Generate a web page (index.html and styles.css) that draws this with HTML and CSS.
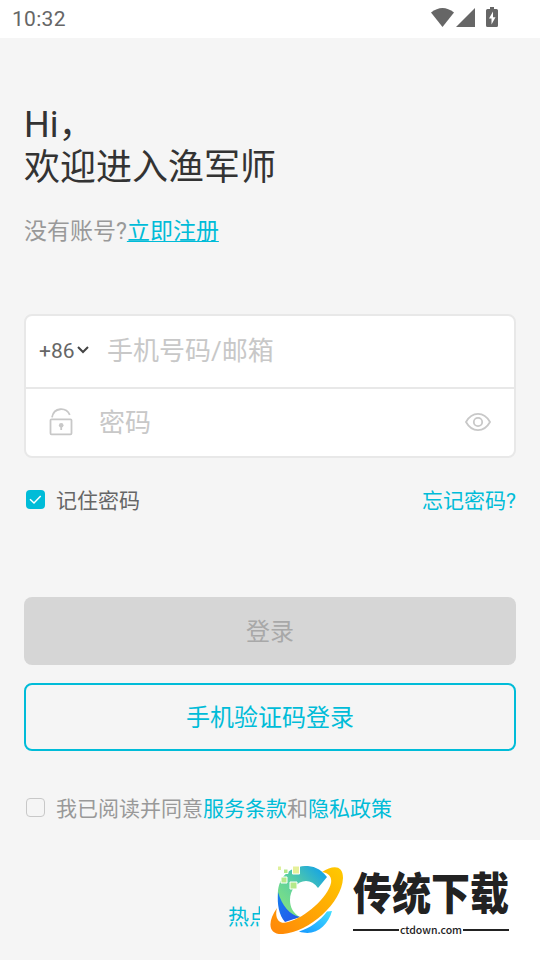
FILE: index.html
```html
<!DOCTYPE html>
<html lang="zh-CN">
<head>
<meta charset="utf-8">
<title>登录</title>
<link rel="stylesheet" href="styles.css">
</head>
<body>
<header class="status">
  <span class="clock">10:32</span>
  <svg class="status-icons" width="70" height="24" viewBox="0 0 70 24">
    <path d="M1 10.500Q12.500 1.500 24 10.500L12.500 25z"/>
    <path d="M26 25L45 6V25z"/>
    <path fill-rule="evenodd" d="M57.500 7H60V5h4v2h2.500q1.500 0 1.500 1.500v15q0 1.500-1.500 1.500h-9q-1.500 0-1.500-1.500v-15Q56 7 57.500 7zM63 9.500L59 16.500h2.500V22.500L65.500 15.300H63z"/>
  </svg>
</header>
<main class="page">
  <h1 class="title">Hi，<br>欢迎进入渔军师</h1>
  <p class="signup">没有账号?<a class="signup-link">立即注册</a></p>
  <section class="fields">
    <div class="field phone">
      <span class="code">+86</span>
      <svg class="chevron" width="14" height="10" viewBox="0 0 14 10"><path d="M2 2L7 7L12 2"/></svg>
      <span class="placeholder">手机号码/邮箱</span>
    </div>
    <div class="field password">
      <svg class="lock" width="26" height="30" viewBox="0 0 26 30">
        <rect x="2.500" y="12.300" width="21" height="15" rx="1"/>
        <path d="M4 10.300C6 0 18 0 21.800 7.800"/>
        <circle class="solid" cx="13.200" cy="18.300" r="2.300"/><path d="M13.200 18.500V23"/>
      </svg>
      <span class="placeholder">密码</span>
      <svg class="eye" width="28" height="22" viewBox="0 0 28 22"><path d="M2 11C8 .2 20 .2 26 11C20 21.800 8 21.800 2 11z"/><circle cx="14" cy="11" r="4.200"/></svg>
    </div>
  </section>
  <div class="options">
    <svg class="check" width="19" height="19" viewBox="0 0 19 19"><rect width="19" height="19" rx="4"/><path d="M4 9.300L8 13L14.700 6"/></svg>
    <span class="remember">记住密码</span>
    <a class="link forgot">忘记密码?</a>
  </div>
  <div class="button disabled">登录</div>
  <div class="button outline">手机验证码登录</div>
  <div class="agreement">
    <span class="box"></span>
    <span>我已阅读并同意<a class="link">服务条款</a>和<a class="link">隐私政策</a></span>
  </div>
  <div class="hotline link">热点</div>
</main>
<aside class="watermark">
  <svg class="emblem" width="80" height="80" viewBox="0 0 80 80">
    <defs>
      <linearGradient id="arc" x1="0" y1="1" x2="1" y2="0"><stop offset="0" stop-color="#8ee878"/><stop offset=".5" stop-color="#5bcfa0"/><stop offset="1" stop-color="#079bf3"/></linearGradient>
      <linearGradient id="ring" x1="0" y1="1" x2="1" y2="0"><stop offset="0" stop-color="#ff8608"/><stop offset="1" stop-color="#ffca00"/></linearGradient>
      <linearGradient id="blue" x1="0" y1="0" x2="1" y2="1"><stop offset="0" stop-color="#167fee"/><stop offset="1" stop-color="#2553ea"/></linearGradient>
      <linearGradient id="tail" x1="0" y1="1" x2="1" y2="0"><stop offset="0" stop-color="#1597ff"/><stop offset="1" stop-color="#43dfff"/></linearGradient>
    </defs>
    <path fill="url(#arc)" d="M57 16C50 7 43 5 35 5C18 6 7 18 8 35C8 45 14 56 24 58L30 56C23 52 20 46 20 39C20 29 27 20 36 20Q43 20 48 27Z"/>
    <path fill="url(#blue)" d="M8 31C7 44 9 54 15 61L30 56C20 54 12 45 8 31z"/>
    <path fill="url(#tail)" d="M29 70.500C45 76 58 65 62 50L57 50.500C50 60 40 67 29 70.500z"/>
    <path fill="url(#ring)" d="M52 11C63 4 73 4 73 17C72 42 39 71 13 73C-2 74-3 61 7 47C4 58 10 64 18 61C35 57 58 36 61 22C62 16 59 12 52 11z"/>
    <g stroke="#fff" stroke-width="1"><path fill="#e6f099" d="M22.500 5h7v8h-7z"/><path fill="#b5e98a" d="M20 21h7v7h-7zM11 16h6v6h-6zM13.500 8h4.500v4.500h-4.500z"/><path fill="#dff09c" d="M7.500 5h4v4.500h-4z"/></g>
  </svg>
  <div class="brand">
    <div class="brand-name"><span>传统下载</span></div>
    <div class="brand-site"><i></i><span>ctdown.com</span><i></i></div>
  </div>
</aside>
</body>
</html>
```

FILE: styles.css
```css
* { box-sizing: border-box; }
body { margin: 0; width: 540px; height: 960px; overflow: hidden; background: #f5f5f5; color: #999; font-family: Roboto, "Noto Sans CJK SC", sans-serif; font-weight: 400; }
.status { height: 38px; background: #fff; display: flex; align-items: flex-start; justify-content: space-between; padding: 0 40px 0 12px; }
.clock { font-size: 21px; line-height: 38px; font-weight: 450; letter-spacing: .3px; color: #666; }
.status-icons { fill: #666; margin-top: 2px; overflow: visible; }
.page { padding: 66px 24px 0; display: flex; flex-direction: column; }
.title { margin: 0; font-size: 36px; line-height: 43px; font-weight: 400; color: #333; }
.signup { margin: 26px 0 0; font-size: 23px; line-height: 32px; }
.signup-link { color: #00bcd8; text-decoration: underline; text-decoration-thickness: 1px; text-underline-offset: 2px; text-decoration-skip-ink: none; }
.fields { height: 144px; margin-top: 66px; background: #fff; border: 2px solid #e8e8e8; border-radius: 8px; }
.field { display: flex; align-items: center; height: 70px; }
.phone { height: 73px; padding: 0 0 1px 13px; border-bottom: 2px solid #e8e8e8; }
.password { height: 67px; padding: 0 22px; }
.code { color: #666; font-size: 21px; width: 37px; }
.chevron { fill: none; stroke: #444; stroke-width: 2; margin-top: -2px; }
.placeholder { color: #c8c8c8; font-size: 26px; line-height: 36px; }
.phone .placeholder { margin-left: 17px; }
.lock, .eye { fill: none; stroke: #c8c8c8; stroke-width: 1.800; margin-top: -2px; }
.lock .solid { fill: #c8c8c8; stroke: none; }
.password .placeholder { margin-left: 25px; }
.eye { margin-left: auto; }
.options { display: flex; align-items: center; height: 30px; margin-top: 26px; padding-left: 2px; font-size: 21px; }
.check { fill: #00bcd8; }
.check path { fill: none; stroke: #fff; stroke-width: 1.500; }
.remember { color: #666; margin-left: 11px; }
.link { color: #00bcd8; }
.forgot { margin-left: auto; }
.button { height: 68px; padding-bottom: 3px; border-radius: 8px; font-size: 24px; display: flex; align-items: center; justify-content: center; }
.disabled { margin-top: 83px; background: #d6d6d6; color: #a8a8a8; }
.outline { margin-top: 18px; border: 2px solid #00bcd8; color: #00bcd8; }
.agreement { display: flex; align-items: center; height: 30px; margin-top: 41px; padding-left: 2px; font-size: 21px; }
.box { width: 19px; height: 19px; border: 1px solid #c8c8c8; border-radius: 4px; margin-right: 11px; }
.hotline { width: 84px; align-self: center; margin-top: 80px; font-size: 21px; line-height: 30px; }
.watermark { position: absolute; left: 260px; top: 840px; width: 280px; height: 120px; background: #fff; display: flex; align-items: flex-start; }
.emblem { margin: 21px 0 0 10px; flex: none; }
.brand { width: 156px; margin-left: 3px; padding-top: 29px; color: #222; }
.brand-name { height: 42px; display: flex; align-items: center; font-family: "Noto Sans CJK SC", sans-serif; font-size: 39px; font-weight: 900; line-height: 40px; white-space: nowrap; }
.brand-name span { transform: scaleY(1.150); }
.brand-site { display: flex; align-items: center; justify-content: space-between; height: 14px; margin-top: 12px; font: 500 10.500px/12px "Noto Sans CJK SC", sans-serif; }
.brand-site i { width: 46px; height: 2px; background: #222; }
```
